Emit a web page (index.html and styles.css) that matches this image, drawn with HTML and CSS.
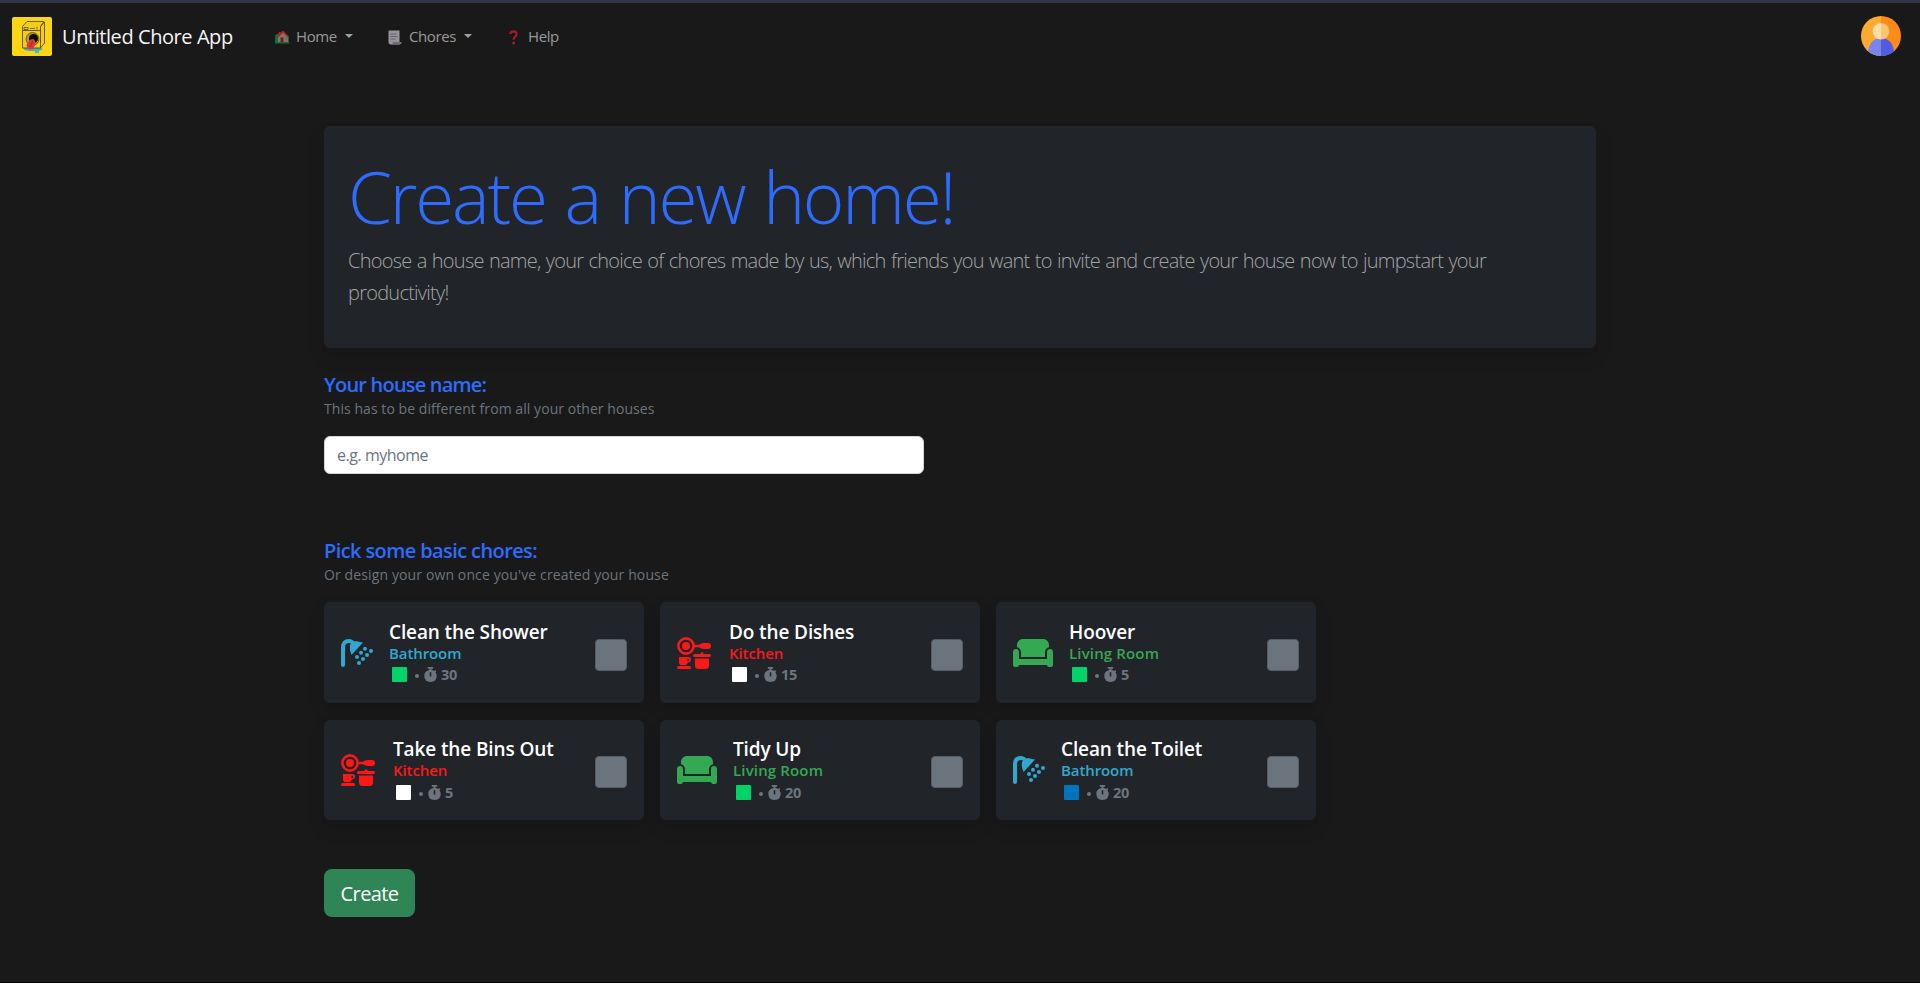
FILE: index.html
```html
<!DOCTYPE html>
<html lang="en">
<head>
<meta charset="utf-8">
<title>Untitled Chore App</title>
<link rel="stylesheet" href="styles.css">
</head>
<body>
<svg class="defs" aria-hidden="true">
  <symbol id="shower" viewBox="0 0 32 28">
    <path d="M2 26V8.500Q2 2 8 2Q10.500 2 13 5" fill="none" stroke="currentColor" stroke-width="4" stroke-linecap="round"/>
    <path d="M9 6Q11 3 15 2Q19 3 22 3.500L10.500 16Q8 11 9 6Z" fill="currentColor"/>
    <g fill="currentColor"><circle cx="24" cy="9.700" r="2"/><circle cx="20" cy="13.800" r="2"/><circle cx="16" cy="18" r="2"/><circle cx="30" cy="12" r="2"/><circle cx="26" cy="16" r="2"/><circle cx="22" cy="20" r="2"/><circle cx="18" cy="24" r="2"/></g>
  </symbol>
  <symbol id="kitchen" viewBox="0 0 34 32">
    <circle cx="9" cy="9" r="7.600" fill="none" stroke="currentColor" stroke-width="2.600"/><circle cx="9" cy="9" r="4" fill="currentColor"/>
    <path d="M17 7.800H22Q24 6 27 6H31Q34 6 34 9T31 12H27Q24 12 22 10.300H17Z" fill="currentColor"/>
    <path d="M2 20H11.500Q14 20 14 22.500Q14 25.500 11 25.500Q10 28 8 28H4Q2 28 2 25ZM10.500 21.800V24.200H11.500Q12.300 24 12.300 23T11.500 21.800Z" fill="currentColor" fill-rule="evenodd"/>
    <rect y="29" width="14" height="3" rx="1.500" fill="currentColor"/>
    <path d="M17.500 17H23.500V16Q25 14.500 26.500 16V17H32.500Q34 17 34 18.500T32.500 20H17.500Q16 20 16 18.500T17.500 17ZM18 21.500H32V28.500Q32 32 28.500 32H21.500Q18 32 18 28.500Z" fill="currentColor"/>
  </symbol>
  <symbol id="sofa" viewBox="0 0 640 448">
    <path d="M64 96C64 43 107 0 160 0H480C533 0 576 43 576 96V130C539 137 512 170 512 208V288H128V208C128 170 101 137 64 130ZM0 208C0 180 20 160 48 160S96 180 96 208V320H544V208C544 180 564 160 592 160S640 180 640 208V416Q640 448 608 448H576Q550 448 544 416H96Q90 448 64 448H32Q0 448 0 416Z" fill="currentColor"/>
  </symbol>
  <symbol id="watch" viewBox="0 0 13 15">
    <path d="M3.800 0H9.200V1.700H7.500V3Q9 3.200 10.100 3.900L11.100 3L12.300 4.200L11.400 5.200Q12.700 6.700 12.700 8.800Q12.700 15 6.500 15T.3 8.800Q.3 3.900 5.500 3V1.700H3.800ZM5.700 5.200V9.600H7.300V5.200Z" fill="currentColor" fill-rule="evenodd"/>
  </symbol>
</svg>

<nav class="navbar">
  <a class="brand">
    <svg class="logo" viewBox="0 0 40 39">
      <rect width="40" height="39" rx="2" fill="#fcd613"/>
      <ellipse cx="21" cy="32" rx="9.500" ry="2" fill="#55a9b5"/>
      <path d="M10.500 9.500L15 4.500H32L28.500 9.500V31H10.500ZM28.500 9.500L32.500 5V26L28.500 31M10.500 13.500H28.500" fill="#f4ce16" stroke="#5a4c10" stroke-width=".9"/>
      <path d="M12 10.500h4v2h-4zM18 11.500h5M25 10v2.500" fill="none" stroke="#5a4c10" stroke-width=".8"/>
      <circle cx="20.500" cy="22" r="6.500" fill="#b89a17" stroke="#5a4c10" stroke-width=".8"/>
      <circle cx="21.500" cy="21.500" r="4.500" fill="#080808"/>
      <path d="M18 23Q21 21 23 23.500Q23.500 26 22.500 29Q21 34 17 32Q13.500 29.500 15 27Z" fill="#e4353c"/>
      <path d="M20.500 24Q20 28 18 30" fill="none" stroke="#8b1c25" stroke-width=".8"/>
      <rect x="23" y="33" width="4" height="3" fill="#39bfd0"/>
    </svg>
    <span class="brand-text">Untitled Chore App</span>
  </a>
  <a class="nav-link nav-home">
    <svg class="emoji" width="15" height="14" viewBox="0 0 15 14"><circle cx="2.600" cy="6.500" r="2.500" fill="#087442"/><path d="M0 8h5v5H0z" fill="#087442"/><path d="M3 6L7.700 1.500L13.500 6.500V12.500H3Z" fill="#937052"/><path d="M2 6.500L4 2h1.300v1L8 .6L14 6.800L12.800 7.600L8 3L3 7.500Z" fill="#9d2e2e"/><path d="M5.500 7.500h3v5h-3z" fill="#4d2e2b"/><path d="M10 7h2.500v3H10z" fill="#4b7790"/><path d="M.2 12.300h14.300v1.200H.2z" fill="#087442"/></svg>
    <span>Home</span><i class="caret"></i>
  </a>
  <a class="nav-link nav-chores">
    <svg class="emoji" width="14" height="15" viewBox="0 0 14 15"><path d="M.5.500H11.500V12H13.500Q13.500 14.500 11 14.500H3Q.5 14.500.5 12Z" fill="#97939b"/><path d="M5 12h8.500Q13 14.500 11 14.500H3Q5 14 5 12Z" fill="#706b7a"/><path d="M2.500 4h6M2.500 6.500h7M2.500 9h5" stroke="#615c69" stroke-width=".9"/></svg>
    <span>Chores</span><i class="caret"></i>
  </a>
  <a class="nav-link nav-help">
    <svg class="emoji" width="9" height="15" viewBox="0 0 9 15"><path d="M1.400 4Q1.600 1.400 4.500 1.400T7.600 4.200Q7.600 5.800 5.900 6.900Q4.700 7.700 4.700 9.700" fill="none" stroke="#9d2226" stroke-width="2.200"/><circle cx="4.700" cy="13" r="1.500" fill="#9d2226"/></svg>
    <span>Help</span>
  </a>
  <svg class="avatar" viewBox="0 0 40 40">
    <clipPath id="disc"><circle cx="20" cy="20" r="20"/></clipPath>
    <g clip-path="url(#disc)"><path d="M0 0h20v40H0z" fill="#fdab2e"/><path d="M20 0h20v40H20z" fill="#fc8b18"/><path d="M7 40V35Q9 22.500 20 22V40Z" fill="#7c84e8"/><path d="M33 40V35Q31 22.500 20 22V40Z" fill="#525ce0"/><path d="M20 7a8.300 8.300 0 0 0 0 16.600z" fill="#fddcab"/><path d="M20 7a8.300 8.300 0 0 1 0 16.600z" fill="#fcc571"/></g>
  </svg>
</nav>

<main class="page">
  <header class="hero">
    <h1 class="hero-title">Create a new home!</h1>
    <p class="hero-lead">Choose a house name, your choice of chores made by us, which friends you want to invite and create your house now to jumpstart your<br>productivity!</p>
  </header>

  <section class="name-section">
    <h2 class="heading heading-name">Your house name:</h2>
    <p class="hint hint-name">This has to be different from all your other houses</p>
    <input class="name-input" type="text" placeholder="e.g. myhome">
  </section>

  <section class="chores-section">
    <h2 class="heading">Pick some basic chores:</h2>
    <p class="hint">Or design your own once you've created your house</p>
    <div class="chores">
      <article class="chore bathroom">
        <svg class="room-icon shower"><use href="#shower"/></svg>
        <div class="chore-body"><h3 class="chore-name">Clean the Shower</h3><p class="room">Bathroom</p><p class="meta"><b class="swatch green"></b><i class="dot"></i><svg class="watch"><use href="#watch"/></svg><span>30</span></p></div>
        <button class="check" aria-label="Select"></button>
      </article>
      <article class="chore kitchen">
        <svg class="room-icon pans"><use href="#kitchen"/></svg>
        <div class="chore-body"><h3 class="chore-name">Do the Dishes</h3><p class="room">Kitchen</p><p class="meta"><b class="swatch white"></b><i class="dot"></i><svg class="watch"><use href="#watch"/></svg><span>15</span></p></div>
        <button class="check" aria-label="Select"></button>
      </article>
      <article class="chore living">
        <svg class="room-icon sofa"><use href="#sofa"/></svg>
        <div class="chore-body"><h3 class="chore-name">Hoover</h3><p class="room">Living Room</p><p class="meta"><b class="swatch green"></b><i class="dot"></i><svg class="watch"><use href="#watch"/></svg><span>5</span></p></div>
        <button class="check" aria-label="Select"></button>
      </article>
      <article class="chore kitchen">
        <svg class="room-icon pans"><use href="#kitchen"/></svg>
        <div class="chore-body"><h3 class="chore-name">Take the Bins Out</h3><p class="room">Kitchen</p><p class="meta"><b class="swatch white"></b><i class="dot"></i><svg class="watch"><use href="#watch"/></svg><span>5</span></p></div>
        <button class="check" aria-label="Select"></button>
      </article>
      <article class="chore living">
        <svg class="room-icon sofa"><use href="#sofa"/></svg>
        <div class="chore-body"><h3 class="chore-name">Tidy Up</h3><p class="room">Living Room</p><p class="meta"><b class="swatch green"></b><i class="dot"></i><svg class="watch"><use href="#watch"/></svg><span>20</span></p></div>
        <button class="check" aria-label="Select"></button>
      </article>
      <article class="chore bathroom">
        <svg class="room-icon shower"><use href="#shower"/></svg>
        <div class="chore-body"><h3 class="chore-name">Clean the Toilet</h3><p class="room">Bathroom</p><p class="meta"><b class="swatch blue"></b><i class="dot"></i><svg class="watch"><use href="#watch"/></svg><span>20</span></p></div>
        <button class="check" aria-label="Select"></button>
      </article>
    </div>
  </section>
  <button class="create">Create</button>
</main>
</body>
</html>
```

FILE: styles.css
```css
* { box-sizing: border-box; }
html { height: 100%; background: #191919; }
body {
  margin: 0;
  height: 983px;
  overflow: hidden;
  border-top: 3px solid #2f3546;
  border-bottom: 1px solid #000;
  background: #191919;
  color: #fff;
  font-family: "Segoe UI", "Open Sans", "Noto Sans", sans-serif;
  font-size: 16px;
}
h1, h2, h3, p { margin: 0; }
.defs { display: none; }

.navbar { display: flex; align-items: center; height: 66px; padding: 0 19px 0 12px; }
.brand { display: flex; align-items: center; width: 263px; gap: 10px; }
.logo { width: 40px; height: 39px; flex: none; }
.brand-text { padding-top: 1px; font-size: 20px; line-height: 30px; letter-spacing: -.43px; color: #f5f5f5; white-space: nowrap; }
.nav-link { display: flex; align-items: center; color: #999; font-size: 15px; line-height: 22px; letter-spacing: -.4px; }
.nav-home { width: 113px; }
.nav-chores { width: 121px; }
.emoji { margin-right: 6px; flex: none; position: relative; top: 1px; }
.nav-chores .emoji { margin-right: 7px; }
.nav-help .emoji { margin-right: 10px; }
.caret { margin-left: 8px; border: 4.500px solid transparent; border-top-color: #a0a0a0; border-bottom: 0; }
.avatar { width: 40px; height: 40px; margin-left: auto; }

.page { width: 1272px; margin: 57px auto 0; }
.hero { height: 222px; padding: 28px 24px; border-radius: 6px; background: #212529; box-shadow: 0 8px 16px rgba(0, 0, 0, .15); }
.hero-title { margin-bottom: 5px; color: #2d6cff; font-size: 71px; font-weight: 300; line-height: 86px; letter-spacing: -2.200px; word-spacing: 2.500px; white-space: nowrap; }
.hero-lead { color: #a3a4a5; font-size: 20px; font-weight: 300; line-height: 32px; letter-spacing: -.75px; word-spacing: .8px; white-space: nowrap; }

.name-section { height: 178px; padding-top: 25px; }
.heading { color: #2d6cff; font-size: 20px; font-weight: 600; line-height: 24px; letter-spacing: -.6px; }
.heading-name { letter-spacing: -.8px; }
.hint { padding-top: 1px; color: #6c757d; font-size: 14px; line-height: 22px; letter-spacing: .12px; }
.hint-name { letter-spacing: .06px; }
.name-input { display: block; width: 600px; height: 38px; margin-top: 16px; padding: 0 12px; border: 1px solid #ced4da; border-radius: 6px; font: inherit; letter-spacing: -.47px; }
.name-input::placeholder { color: #6c757d; opacity: 1; }

.chores-section { padding-top: 13px; }
.chores { display: grid; grid-template-columns: repeat(3, 319.500px); grid-template-rows: 101px 100px; gap: 17px 16.500px; margin-top: 16px; }
.chore { display: flex; align-items: center; padding: 0 16.500px 0 17px; border-radius: 6px; background: #212529; box-shadow: 0 8px 16px rgba(0, 0, 0, .15); }
.bathroom { color: #32a7cf; }
.kitchen { color: #fb1818; }
.living { color: #35a853; }
.room-icon { flex: none; margin-right: 16px; }
.shower { width: 32px; height: 28px; }
.pans { width: 34px; height: 32px; margin-right: 18px; }
.sofa { width: 40px; height: 28px; }
.chore-body { padding-top: 1px; }
.chore-name { color: #fff; font-size: 19px; font-weight: 600; line-height: 24px; letter-spacing: -.12px; white-space: nowrap; }
.room { font-size: 15px; font-weight: 600; line-height: 19px; letter-spacing: -.1px; white-space: nowrap; }
.living .room { letter-spacing: .15px; }
.meta { display: flex; align-items: center; height: 24px; padding-left: 3px; color: #6c757d; font-size: 14.500px; font-weight: 700; letter-spacing: -.3px; }
.swatch { width: 15px; height: 15px; border-radius: 1px; }
.green { background: #00d468; }
.white { background: #fff; }
.blue { background: #0075bd; }
.dot { width: 4px; height: 4px; margin: 3px 5px 0 8px; border-radius: 50%; background: currentColor; }
.watch { width: 13px; height: 15px; margin-right: 4px; }
.check { width: 32px; height: 32px; margin: 4px 0 0 auto; padding: 0; border: 1px solid #565e65; border-radius: 4px; background: #6c757d; }

.create { display: block; width: 91px; height: 48px; margin-top: 49px; padding: 0; border: 0; border-radius: 8px; background: #2f8555; color: #fff; font: inherit; font-size: 20px; letter-spacing: -.6px; }
```
